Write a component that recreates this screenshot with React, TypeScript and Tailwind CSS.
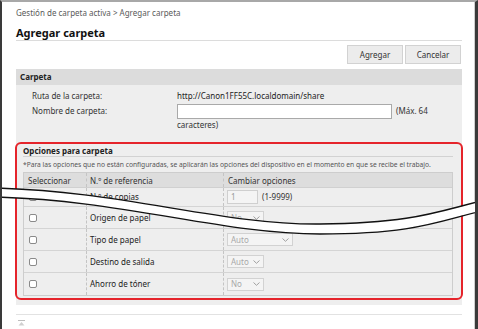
import React from "react";

const rows = [
  { label: "Origen de papel", value: "No", w: "w-[37px]" },
  { label: "Tipo de papel", value: "Auto", w: "w-[66px]" },
  { label: "Destino de salida", value: "Auto", w: "w-[37px]" },
  { label: "Ahorro de tóner", value: "No", w: "w-[37px]" },
];

const Chevron = () => (
  <svg width="7" height="4" viewBox="0 0 7 4" className="shrink-0">
    <path d="M0.5 0.5 L3.5 3.3 L6.5 0.5" fill="none" stroke="#a0a0a0" strokeWidth="1" />
  </svg>
);

const Checkbox = () => (
  <span className="block w-[8px] h-[8px] border border-[#8a8a8a] rounded-[2px] bg-white" />
);

const App = () => {
  return (
    <div className="relative w-[478px] h-[329px] overflow-hidden bg-white border-t-2 border-t-[#a8a8a8] border-l-2 border-l-[#3a3a3a] border-r-[3px] border-r-[#3a3a3a] shadow-[inset_-1px_0_0_#cfcfcf] font-['Noto_Sans',sans-serif] text-[8px] text-[#222]">
      <div className="pl-[14px] pr-[13px]">
        {/* breadcrumb + title */}
        <div className="pt-[5px] h-[19px] leading-[12px] text-[8px] text-[#5a5a5a]">
          Gestión de carpeta activa &gt; Agregar carpeta
        </div>
        <div className="mt-[5px] h-[15px] leading-[14px] text-[11px] font-bold text-[#111] border-b border-[#dcdcdc]">
          Agregar carpeta
        </div>

        {/* buttons */}
        <div className="mt-[4px] flex justify-end gap-[2px] pr-[1px]">
          <button className="w-[56px] h-[19px] bg-[#ececec] border border-[#d2d2d2] text-[8px] text-[#333]">
            Agregar
          </button>
          <button className="w-[56px] h-[19px] bg-[#ececec] border border-[#d2d2d2] text-[8px] text-[#333]">
            Cancelar
          </button>
        </div>

        {/* folder section */}
        <div className="mt-[5px] bg-[#eeeeee] pb-[5px]">
          <div className="h-[16px] leading-[16px] bg-[#dcdcdc] pl-[4px] font-bold text-[8px] text-[#222]">
            Carpeta
          </div>
          <div className="pt-[4px] flex h-[18px] leading-[14px]">
            <div className="pl-[16px] w-[161px] text-[#333]">Ruta de la carpeta:</div>
            <div className="text-[#222]">http://Canon1FF55C.localdomain/share</div>
          </div>
          <div className="flex h-[16px] items-center">
            <div className="pl-[16px] w-[161px] text-[#333]">Nombre de carpeta:</div>
            <div className="w-[215px] h-[15px] bg-white border border-[#a9a9a9]" />
            <div className="pl-[4px] text-[#333]">(Máx. 64</div>
          </div>
          <div className="pl-[161px] h-[13px] leading-[12px] text-[#333]">caracteres)</div>

          {/* options, highlighted */}
          <div className="mt-[10px] -mx-[1px] border-2 border-[#e5242b] rounded-[6px] pl-[6px] pr-[8px] pb-[2px]">
            <div className="h-[13px] leading-[13px] font-bold text-[8px] text-[#222] border-b border-[#d2d2d2]">
              Opciones para carpeta
            </div>
            <div className="mt-[2px] h-[12px] leading-[12px] text-[6.7px] text-[#555] whitespace-nowrap">
              *Para las opciones que no están configuradas, se aplicarán las opciones del dispositivo en el momento en que se recibe el trabajo.
            </div>
            <div className="mt-[1px] w-[430px] border border-[#cdcdcd]">
              <div className="flex h-[15px] leading-[15px] bg-[#dddddd] text-[#333] border-b border-[#d0d0d0]">
                <div className="w-[62px] pl-[4px]">Seleccionar</div>
                <div className="w-[137px] pl-[3px] border-l border-dashed border-[#c4c4c4]">N.º de referencia</div>
                <div className="flex-1 pl-[4px] border-l border-dashed border-[#c4c4c4]">Cambiar opciones</div>
              </div>
              <div className="flex h-[19px] border-b border-[#d4d4d4]">
                <div className="w-[62px] pl-[5px] flex items-center">
                  <Checkbox />
                </div>
                <div className="w-[137px] pl-[3px] flex items-center border-l border-dashed border-[#c4c4c4]">
                  N.º de copias
                </div>
                <div className="flex-1 pl-[3px] flex items-center gap-[4px] border-l border-dashed border-[#c4c4c4]">
                  <div className="w-[31px] h-[14px] leading-[12px] pl-[3px] bg-[#f4f4f4] border border-[#cfcfcf] text-[#9a9a9a]">1</div>
                  <span className="text-[#333]">(1-9999)</span>
                </div>
              </div>
              {rows.map((r, i) => (
                <div
                  key={r.label}
                  className={`flex h-[22px] ${i < rows.length - 1 ? "border-b border-[#d4d4d4]" : ""}`}
                >
                  <div className="w-[62px] pl-[5px] flex items-center">
                    <Checkbox />
                  </div>
                  <div className="w-[137px] pl-[3px] flex items-center border-l border-dashed border-[#c4c4c4]">
                    {r.label}
                  </div>
                  <div className="flex-1 pl-[3px] flex items-center border-l border-dashed border-[#c4c4c4]">
                    <div
                      className={`${r.w} h-[13px] flex items-center justify-between pl-[3px] pr-[3px] bg-[#f4f4f4] border border-[#d2d2d2] text-[#a8a8a8]`}
                    >
                      <span>{r.value}</span>
                      <Chevron />
                    </div>
                  </div>
                </div>
              ))}
            </div>
          </div>
        </div>

        {/* footer */}
        <div className="mt-[9px] border-t border-[#e2e2e2] pt-[5px] pl-[2px]">
          <svg width="7" height="6" viewBox="0 0 7 6">
            <path d="M0 0.5 H7" stroke="#bdbdbd" strokeWidth="1" />
            <path d="M3.5 2 L6.5 5.5 H0.5 Z" fill="#d0d0d0" />
          </svg>
        </div>
      </div>

      {/* break mark: omitted content */}
      <svg className="absolute left-[-2px] top-[-2px] pointer-events-none" width="478" height="329" viewBox="0 0 478 329">
        <path
          d="M-10 192.5 C120 194.5 220 229.5 320 229 S440 215 490 204"
          fill="none"
          stroke="#ffffff"
          strokeWidth="9"
        />
        <path d="M-10 188 C120 190 220 225 320 224 S440 210 490 199" fill="none" stroke="#111" strokeWidth="1.4" />
        <path d="M-10 197 C120 199 220 234 320 234 S440 220 490 209" fill="none" stroke="#111" strokeWidth="1.4" />
      </svg>
    </div>
  );
};

export default App;
